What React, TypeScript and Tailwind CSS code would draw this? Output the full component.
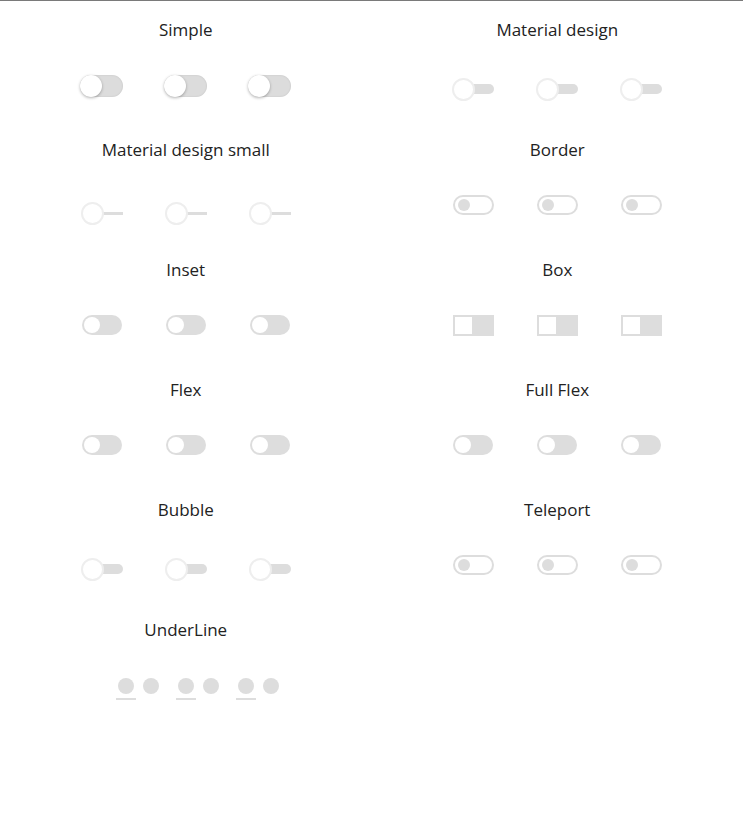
const titleFont = { fontFamily: '"Open Sans", "Noto Sans", sans-serif' };

type Kind =
  | 'simple'
  | 'material'
  | 'materialSmall'
  | 'border'
  | 'inset'
  | 'box'
  | 'flex'
  | 'fullFlex'
  | 'bubble'
  | 'teleport';

function Toggle({ kind }: { kind: Kind }) {
  switch (kind) {
    case 'simple':
      return (
        <div className="relative w-[43px] h-[22px] rounded-full bg-[#dcdcdc] shadow-[inset_0_0_2px_rgba(0,0,0,0.12)]">
          <div className="absolute left-0 top-0 w-[22px] h-[22px] rounded-full bg-white shadow-[0_1px_3px_rgba(0,0,0,0.3)]" />
        </div>
      );
    case 'material':
    case 'bubble':
      return (
        <div className="relative w-[42px] h-[23px] mt-[3px]">
          <div className="absolute left-[10px] right-0 top-[6px] h-[10px] rounded-full bg-[#dddddd]" />
          <div className="absolute left-0 top-0 w-[23px] h-[23px] rounded-full bg-white border-2 border-[#eeeeee]" />
        </div>
      );
    case 'materialSmall':
      return (
        <div className="relative w-[42px] h-[23px] mt-[7px]">
          <div className="absolute left-[12px] right-0 top-[10px] h-[3px] bg-[#dddddd]" />
          <div className="absolute left-0 top-0 w-[23px] h-[23px] rounded-full bg-white border-2 border-[#eeeeee]" />
        </div>
      );
    case 'border':
    case 'teleport':
      return (
        <div className="relative w-[41px] h-[20px] rounded-full border-2 border-[#dddddd] bg-white">
          <div className="absolute left-[3px] top-[2px] w-[12px] h-[12px] rounded-full bg-[#dddddd]" />
        </div>
      );
    case 'inset':
    case 'flex':
    case 'fullFlex':
      return (
        <div className="relative w-[40px] h-[20px] rounded-full bg-[#dddddd]">
          <div className="absolute left-[2px] top-[2px] w-[16px] h-[16px] rounded-full bg-white" />
        </div>
      );
    case 'box':
      return (
        <div className="relative w-[41px] h-[21px] bg-[#dddddd] border-2 border-[#dddddd]">
          <div className="absolute left-0 top-0 w-[17px] h-[17px] bg-white" />
        </div>
      );
  }
}

function Section({ title, kind }: { title: string; kind: Kind }) {
  return (
    <div className="h-[120px] pt-[17px] flex flex-col items-center">
      <h2 className="h-6 text-[17px] leading-6 text-[#222]" style={titleFont}>
        {title}
      </h2>
      <div className="mt-[33px] flex justify-center">
        {[0, 1, 2].map((i) => (
          <div key={i} className="w-[84px] h-[30px] flex justify-center items-start">
            <Toggle kind={kind} />
          </div>
        ))}
      </div>
    </div>
  );
}

function UnderLine() {
  return (
    <div className="h-[120px] pt-[17px] flex flex-col items-center">
      <h2 className="h-6 text-[17px] leading-6 text-[#222]" style={titleFont}>
        UnderLine
      </h2>
      <div className="mt-[36px] pl-[26px] flex gap-[18px]">
        {[0, 1, 2].map((i) => (
          <div key={i} className="relative w-[42px] h-[22px]">
            <div className="flex gap-[9px]">
              <div className="w-[16px] h-[16px] rounded-full bg-[#dddddd]" />
              <div className="w-[16px] h-[16px] rounded-full bg-[#dddddd]" />
            </div>
            <div className="absolute left-[-2px] top-[20px] w-[20px] h-[2px] bg-[#dddddd]" />
          </div>
        ))}
      </div>
    </div>
  );
}

export default function App() {
  return (
    <div className="w-full min-h-[832px] bg-white border-t border-[#7a7a7a]">
      <div className="grid grid-cols-2">
        <Section title="Simple" kind="simple" />
        <Section title="Material design" kind="material" />
        <Section title="Material design small" kind="materialSmall" />
        <Section title="Border" kind="border" />
        <Section title="Inset" kind="inset" />
        <Section title="Box" kind="box" />
        <Section title="Flex" kind="flex" />
        <Section title="Full Flex" kind="fullFlex" />
        <Section title="Bubble" kind="bubble" />
        <Section title="Teleport" kind="teleport" />
        <UnderLine />
      </div>
    </div>
  );
}
